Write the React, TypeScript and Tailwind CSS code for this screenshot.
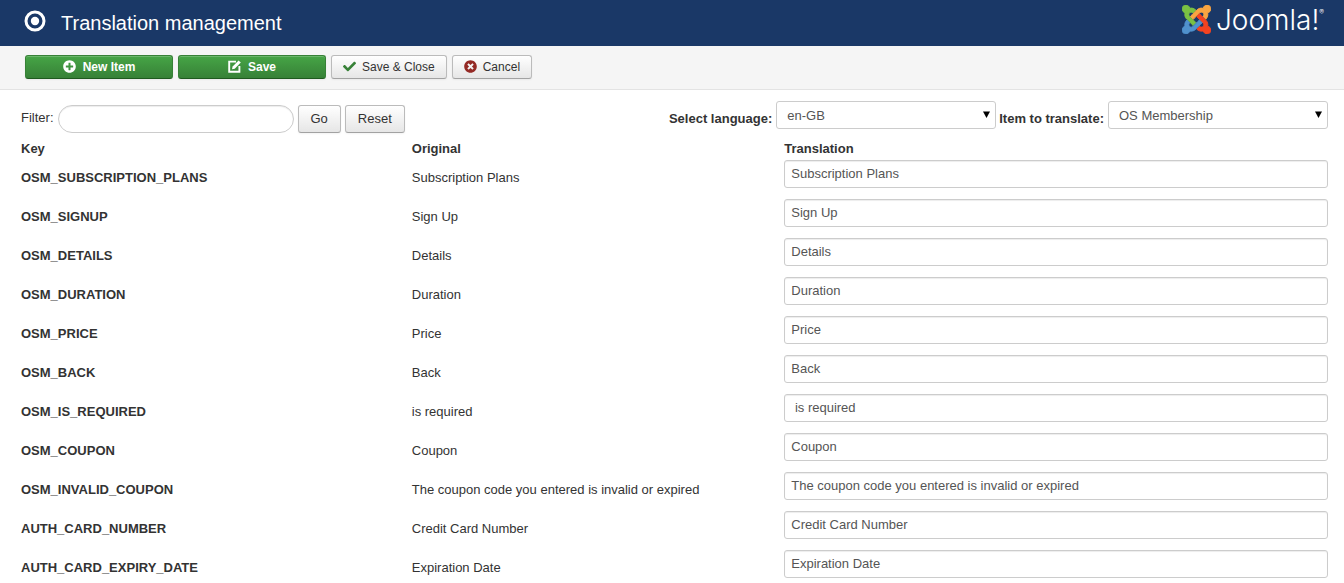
import React, { useState } from 'react';
import { FaCheck, FaPlusCircle, FaTimesCircle } from 'react-icons/fa';

type Item = { key: string; original: string; translation: string };

const items: Item[] = [
  { key: 'OSM_SUBSCRIPTION_PLANS', original: 'Subscription Plans', translation: 'Subscription Plans' },
  { key: 'OSM_SIGNUP', original: 'Sign Up', translation: 'Sign Up' },
  { key: 'OSM_DETAILS', original: 'Details', translation: 'Details' },
  { key: 'OSM_DURATION', original: 'Duration', translation: 'Duration' },
  { key: 'OSM_PRICE', original: 'Price', translation: 'Price' },
  { key: 'OSM_BACK', original: 'Back', translation: 'Back' },
  { key: 'OSM_IS_REQUIRED', original: 'is required', translation: ' is required' },
  { key: 'OSM_COUPON', original: 'Coupon', translation: 'Coupon' },
  {
    key: 'OSM_INVALID_COUPON',
    original: 'The coupon code you entered is invalid or expired',
    translation: 'The coupon code you entered is invalid or expired',
  },
  { key: 'AUTH_CARD_NUMBER', original: 'Credit Card Number', translation: 'Credit Card Number' },
  { key: 'AUTH_CARD_EXPIRY_DATE', original: 'Expiration Date', translation: 'Expiration Date' },
];

function JoomlaMark() {
  return (
    <svg viewBox="0 32 448 448" className="size-[29px]" strokeWidth="14" aria-hidden="true">
      <path
        fill="#7ac143"
        stroke="#7ac143"
        d="M.6 92.1C.6 58.8 27.4 32 60.4 32c30 0 54.5 21.9 59.2 50.2 32.6-7.6 67.1.6 96.5 30l-44.3 44.3c-20.5-20.5-42.6-16.3-55.4-3.5-14.3 14.3-14.3 37.9 0 52.2l99.5 99.5-44 44.3c-87.7-87.2-49.7-49.7-99.8-99.7-26.8-26.5-35-64.8-24.8-98.9C20.4 144.6.6 120.7.6 92.1z"
      />
      <path
        fill="#f9a541"
        stroke="#f9a541"
        d="M130.1 208.5l44.3 44.3c10-10 89.7-89.7 99.7-99.8 14.3-14.3 37.6-14.3 51.9 0 12.8 12.8 17 35-3.5 55.4l44 44.3c31.2-31.2 38.5-67.6 28.9-101.2 29.2-4.1 51.9-29.2 51.9-59.5 0-33.2-26.8-60.1-59.8-60.1-30.3 0-55.4 22.5-59.5 51.6-33.8-9.9-71.7-1.5-98.3 25.1-18.3 19.1-71.1 71.5-99.6 99.9z"
      />
      <path
        fill="#f44321"
        stroke="#f44321"
        d="M396.4 360.7c8.2-32.7-.9-68.5-26.3-93.9-11.8-12.2 5 4.7-99.5-99.7l-44.3 44.3 99.7 99.7c14.3 14.3 14.3 37.6 0 51.9-12.8 12.8-35 17-55.4-3.5l-44 44.3c27.6 30.2 68 38.8 102.7 28 5.5 27.4 29.7 48.1 58.9 48.1 33 0 59.8-26.8 59.8-60.1 0-30.2-22.5-55-51.6-59.1z"
      />
      <path
        fill="#5091cd"
        stroke="#5091cd"
        d="M312.1 307.6l-44-44.3c-87 86.4-50.4 50.4-99.7 99.8-14.3 14.3-37.6 14.3-51.9 0-13.1-13.4-16.9-35.3 3.2-55.4l-44-44.3c-30.2 30.2-38 65.2-29.5 98.3-26.7 6-46.2 29.9-46.2 58.2C0 453.2 26.8 480 59.8 480c28.6 0 52.5-19.8 58.6-46.7 32.7 8.2 68.5-.6 94.2-26 32.1-32 12.2-12.4 99.5-99.7z"
      />
    </svg>
  );
}

function TargetIcon() {
  return (
    <svg viewBox="0 0 22 22" className="size-[22px]" aria-hidden="true">
      <circle cx="11" cy="11" r="9" fill="none" stroke="#fff" strokeWidth="3" />
      <circle cx="11" cy="11" r="4.2" fill="#fff" />
    </svg>
  );
}

function EditIcon() {
  return (
    <svg viewBox="0 0 13 13" className="size-[13px]" aria-hidden="true">
      <path d="M8 1.6H1.2v10.2h10.2V6" fill="none" stroke="#fff" strokeWidth="1.9" />
      <path d="M4 9.3l.6-2.7L10.6.5l2.2 2.1-6.1 6.1z" fill="#fff" />
    </svg>
  );
}

const greenButton =
  'flex h-6 w-[148px] items-center justify-center gap-[7px] rounded-[3px] border border-[#378137] border-b-[#1f5a1f] bg-linear-to-b from-[#46a546] to-[#378137] pb-px text-xs font-bold text-white shadow-[inset_0_1px_0_rgba(255,255,255,0.2),0_1px_2px_rgba(0,0,0,0.05)]';
const greyButton =
  'flex items-center justify-center rounded-[3px] border border-[#bbb] border-b-[#a2a2a2] bg-linear-to-b from-white to-[#e6e6e6] text-[#333] shadow-[inset_0_1px_0_rgba(255,255,255,0.2),0_1px_2px_rgba(0,0,0,0.05)]';
const field =
  'h-7 border border-[#ccc] bg-white text-[13px] text-[#555] shadow-[inset_0_1px_1px_rgba(0,0,0,0.075)]';

function Picker({ id, label, options }: { id: string; label: string; options: string[] }) {
  return (
    <div className="flex items-start gap-1">
      <label htmlFor={id} className="pt-[9px] font-bold">
        {label}
      </label>
      <div className="relative">
        <select
          id={id}
          className="h-7 w-[220px] appearance-none rounded-[3px] border border-[#ccc] bg-white pt-px pr-6 pl-[10px] text-[13px] text-[#555]"
        >
          {options.map((option) => (
            <option key={option}>{option}</option>
          ))}
        </select>
        <svg
          viewBox="0 0 7 7"
          className="pointer-events-none absolute top-[10px] right-[6px] size-[7px]"
          aria-hidden="true"
        >
          <path d="M0 .5h7L3.5 7z" fill="#000" />
        </svg>
      </div>
    </div>
  );
}

export default function App() {
  const [values, setValues] = useState(items.map((item) => item.translation));
  const [filter, setFilter] = useState('');

  return (
    <div className="bg-white font-['Liberation_Sans',Arial,sans-serif] text-[13px] leading-[18px] text-[#333]">
      <header className="flex h-[46px] items-center justify-between bg-[#1a3867] pr-5 pl-6">
        <div className="flex items-center gap-[15px] pb-1">
          <TargetIcon />
          <h1 className="pt-1 text-xl leading-6 text-white">Translation management</h1>
        </div>
        <a href="#joomla" aria-label="Joomla!" className="flex items-center gap-[5px] pb-[7px]">
          <JoomlaMark />
          <span className="flex items-start font-[Inter,sans-serif] text-[28px] leading-[30px] font-light text-white">
            Joomla!<sup className="top-0 pt-1 text-[7px] leading-[7px]">®</sup>
          </span>
        </a>
      </header>

      <div className="flex gap-[5px] border-b border-[#e3e3e3] bg-[#f5f5f5] px-[25px] pt-[9px] pb-[10px]">
        <button type="button" className={greenButton}>
          <FaPlusCircle className="size-[13px]" />
          New Item
        </button>
        <button type="button" className={greenButton}>
          <EditIcon />
          Save
        </button>
        <button type="button" className={`${greyButton} h-6 gap-[6px] px-[11px] pb-px text-xs`}>
          <FaCheck className="size-[13px] text-[#378137]" />
          Save &amp; Close
        </button>
        <button type="button" className={`${greyButton} h-6 gap-[6px] px-[11px] pb-px text-xs`}>
          <FaTimesCircle className="size-[13px] text-[#942a25]" />
          Cancel
        </button>
      </div>

      <main className="pt-[11px] pr-4 pl-[21px]">
        <div className="flex items-start justify-between">
          <div className="flex items-start gap-1 pt-1">
            <label htmlFor="filter" className="pt-1">
              Filter:
            </label>
            <input
              id="filter"
              type="text"
              value={filter}
              onChange={(event) => setFilter(event.target.value)}
              className={`${field} w-[236px] rounded-full px-[14px]`}
            />
            <button type="button" className={`${greyButton} h-7 px-3`}>
              Go
            </button>
            <button type="button" onClick={() => setFilter('')} className={`${greyButton} h-7 px-3`}>
              Reset
            </button>
          </div>
          <div className="flex items-start gap-[3px]">
            <Picker id="language" label="Select language:" options={['en-GB']} />
            <Picker id="item" label="Item to translate:" options={['OS Membership']} />
          </div>
        </div>

        <table className="mt-[5px] w-full table-fixed text-left">
          <thead>
            <tr>
              <th className="w-[29.9%] pt-[2px]">Key</th>
              <th className="w-[28.5%] pt-[2px]">Original</th>
              <th className="pt-[2px]">Translation</th>
            </tr>
          </thead>
          <tbody>
            {items.map((item, index) => (
              <tr key={item.key}>
                <th scope="row">
                  <label htmlFor={item.key}>{item.key}</label>
                </th>
                <td>{item.original}</td>
                <td className="pt-[2px] pb-[9px]">
                  <input
                    id={item.key}
                    type="text"
                    value={values[index]}
                    onChange={(event) =>
                      setValues(values.map((value, i) => (i === index ? event.target.value : value)))
                    }
                    className={`${field} block w-full rounded-[3px] px-[6px] pb-px`}
                  />
                </td>
              </tr>
            ))}
          </tbody>
        </table>
      </main>
    </div>
  );
}
